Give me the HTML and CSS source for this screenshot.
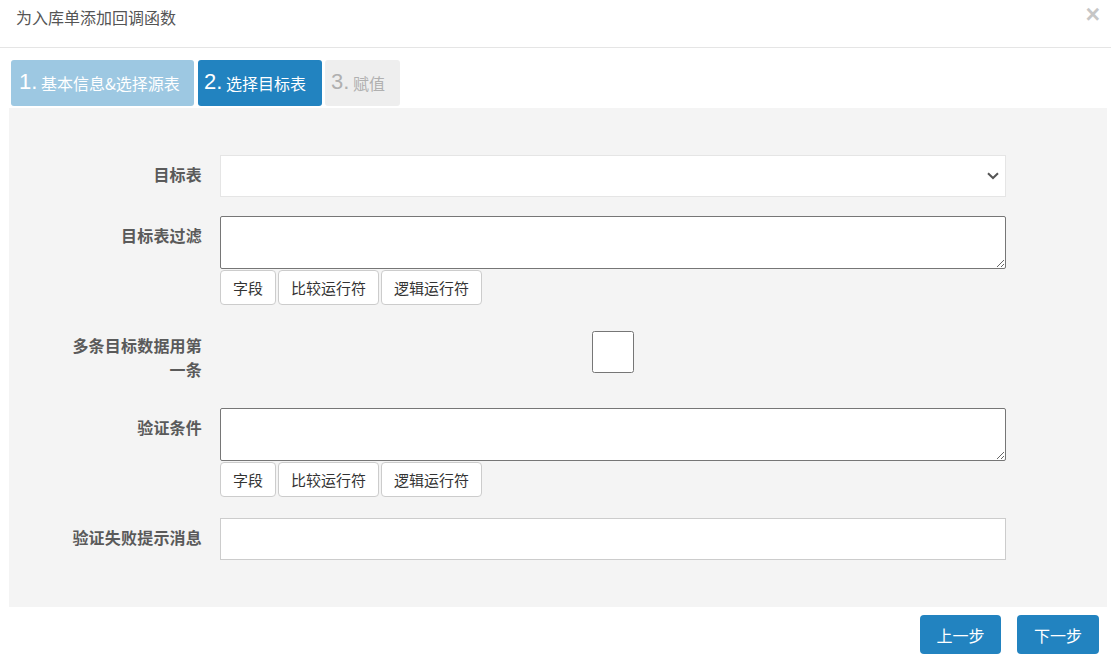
FILE: index.html
```html
<!DOCTYPE html>
<html lang="zh">
<head>
<meta charset="utf-8">
<title>为入库单添加回调函数</title>
<link rel="stylesheet" href="styles.css">
</head>
<body>
<div class="modal">
  <div class="modal-header">
    <h4 class="modal-title">为入库单添加回调函数</h4>
    <button class="close" type="button">×</button>
  </div>
  <ul class="steps">
    <li class="step done"><span class="num">1.</span> 基本信息&amp;选择源表</li>
    <li class="step current"><span class="num">2.</span> 选择目标表</li>
    <li class="step disabled"><span class="num">3.</span> 赋值</li>
  </ul>
  <div class="panel">
    <div class="row row-select">
      <label class="label">目标表</label>
      <div class="select-wrap">
        <select class="select"><option></option></select>
        <svg class="chevron" width="12" height="8" viewBox="0 0 12 8"><path d="M1 1.2 L6 6 L11 1.2" fill="none" stroke="#555" stroke-width="2"/></svg>
      </div>
    </div>
    <div class="row">
      <label class="label">目标表过滤</label>
      <div class="field">
        <textarea class="textarea"></textarea>
        <div class="btn-group">
          <button class="btn" type="button">字段</button>
          <button class="btn" type="button">比较运行符</button>
          <button class="btn" type="button">逻辑运行符</button>
        </div>
      </div>
    </div>
    <div class="row row-check">
      <label class="label">多条目标数据用第一条</label>
      <input class="check" type="checkbox">
    </div>
    <div class="row">
      <label class="label">验证条件</label>
      <div class="field">
        <textarea class="textarea"></textarea>
        <div class="btn-group">
          <button class="btn" type="button">字段</button>
          <button class="btn" type="button">比较运行符</button>
          <button class="btn" type="button">逻辑运行符</button>
        </div>
      </div>
    </div>
    <div class="row row-last">
      <label class="label">验证失败提示消息</label>
      <input class="input" type="text">
    </div>
  </div>
  <div class="footer">
    <button class="primary" type="button">上一步</button>
    <button class="primary" type="button">下一步</button>
  </div>
</div>
</body>
</html>
```
FILE: styles.css
```css
* { box-sizing: border-box; }
html, body { margin: 0; padding: 0; background: #fff; }
body {
  font-family: "Noto Sans CJK SC", "Liberation Sans", sans-serif;
  color: #333;
}
.modal { width: 1111px; height: 669px; }
.modal-header {
  position: relative;
  height: 48px;
  border-bottom: 1px solid #e5e5e5;
  padding: 7px 16px 0;
}
.modal-title {
  margin: 0;
  font-size: 16px;
  line-height: 20px;
  font-weight: 400;
  color: #555;
}
.close {
  position: absolute;
  right: 11px;
  top: 0;
  border: 0;
  background: none;
  padding: 0;
  font-family: "Liberation Sans", sans-serif;
  font-size: 25px;
  font-weight: 700;
  line-height: 28px;
  color: #000;
  opacity: 0.22;
}
.steps {
  list-style: none;
  margin: 12px 0 0;
  padding: 0 0 0 11px;
  display: flex;
  gap: 4px;
  height: 46px;
}
.step {
  display: flex;
  align-items: center;
  height: 46px;
  padding: 0 12px 0 8px;
  font-size: 16px;
  white-space: pre;
  border-radius: 3px;
}
.step .num {
  font-family: "Liberation Sans", sans-serif;
  font-size: 22px;
  margin-top: -3px;
}
.step.done { background: #9dc8e2; color: #fff; width: 183px; }
.step.current { background: #2283c0; color: #fff; width: 124px; padding-left: 6px; }
.step.disabled { background: #eee; color: #b0b0b0; width: 75px; margin-left: -1px; padding-left: 6px; }
.panel {
  margin: 2px 4px 0 9px;
  background: #f4f4f4;
  padding: 47px 0 47px 57px;
}
.row {
  display: grid;
  grid-template-columns: 136px 786px;
  column-gap: 18px;
  align-items: start;
  margin-bottom: 21px;
}
.row-select { margin-bottom: 19px; }
.row-check { margin-bottom: 27px; }
.row-last { margin-bottom: 0; }
.label {
  text-align: right;
  font-size: 16px;
  font-weight: 700;
  line-height: 24px;
  padding-top: 7px;
  color: #5a5a5a;
  letter-spacing: 0.2px;
}
.select-wrap { position: relative; width: 786px; height: 42px; }
.select {
  -webkit-appearance: none;
  appearance: none;
  width: 786px;
  height: 42px;
  border: 1px solid #e5e5e5;
  background: #fff;
  border-radius: 0;
  font-size: 15px;
  padding: 0 8px;
  color: #555;
}
.chevron {
  position: absolute;
  right: 7px;
  top: 17px;
  pointer-events: none;
}
.field { display: flex; flex-direction: column; gap: 1px; }
.textarea {
  display: block;
  width: 786px;
  height: 53px;
  margin: 0;
  border: 1px solid #767676;
  border-radius: 2px;
  background: #fff;
  resize: vertical;
}
.btn-group { display: flex; gap: 2px; }
.btn {
  height: 35px;
  padding: 0 12px;
  border: 1px solid #ccc;
  border-radius: 4px;
  background: #fff;
  color: #333;
  font-family: "Noto Sans CJK SC", sans-serif;
  font-size: 15px;
}
.check {
  justify-self: center;
  width: 42px;
  height: 42px;
  margin: 5px 0 0;
}
.input {
  width: 786px;
  height: 42px;
  border: 1px solid #ccc;
  background: #fff;
  margin: 0;
}
.footer {
  display: flex;
  justify-content: flex-end;
  gap: 16px;
  margin-top: 8px;
  padding-right: 12px;
}
.primary {
  height: 39px;
  width: 81px;
  border: 0;
  border-radius: 4px;
  background: #2283c0;
  color: #fff;
  font-family: "Noto Sans CJK SC", sans-serif;
  font-size: 16px;
  padding: 0;
}
.primary + .primary { width: 82px; }
```
